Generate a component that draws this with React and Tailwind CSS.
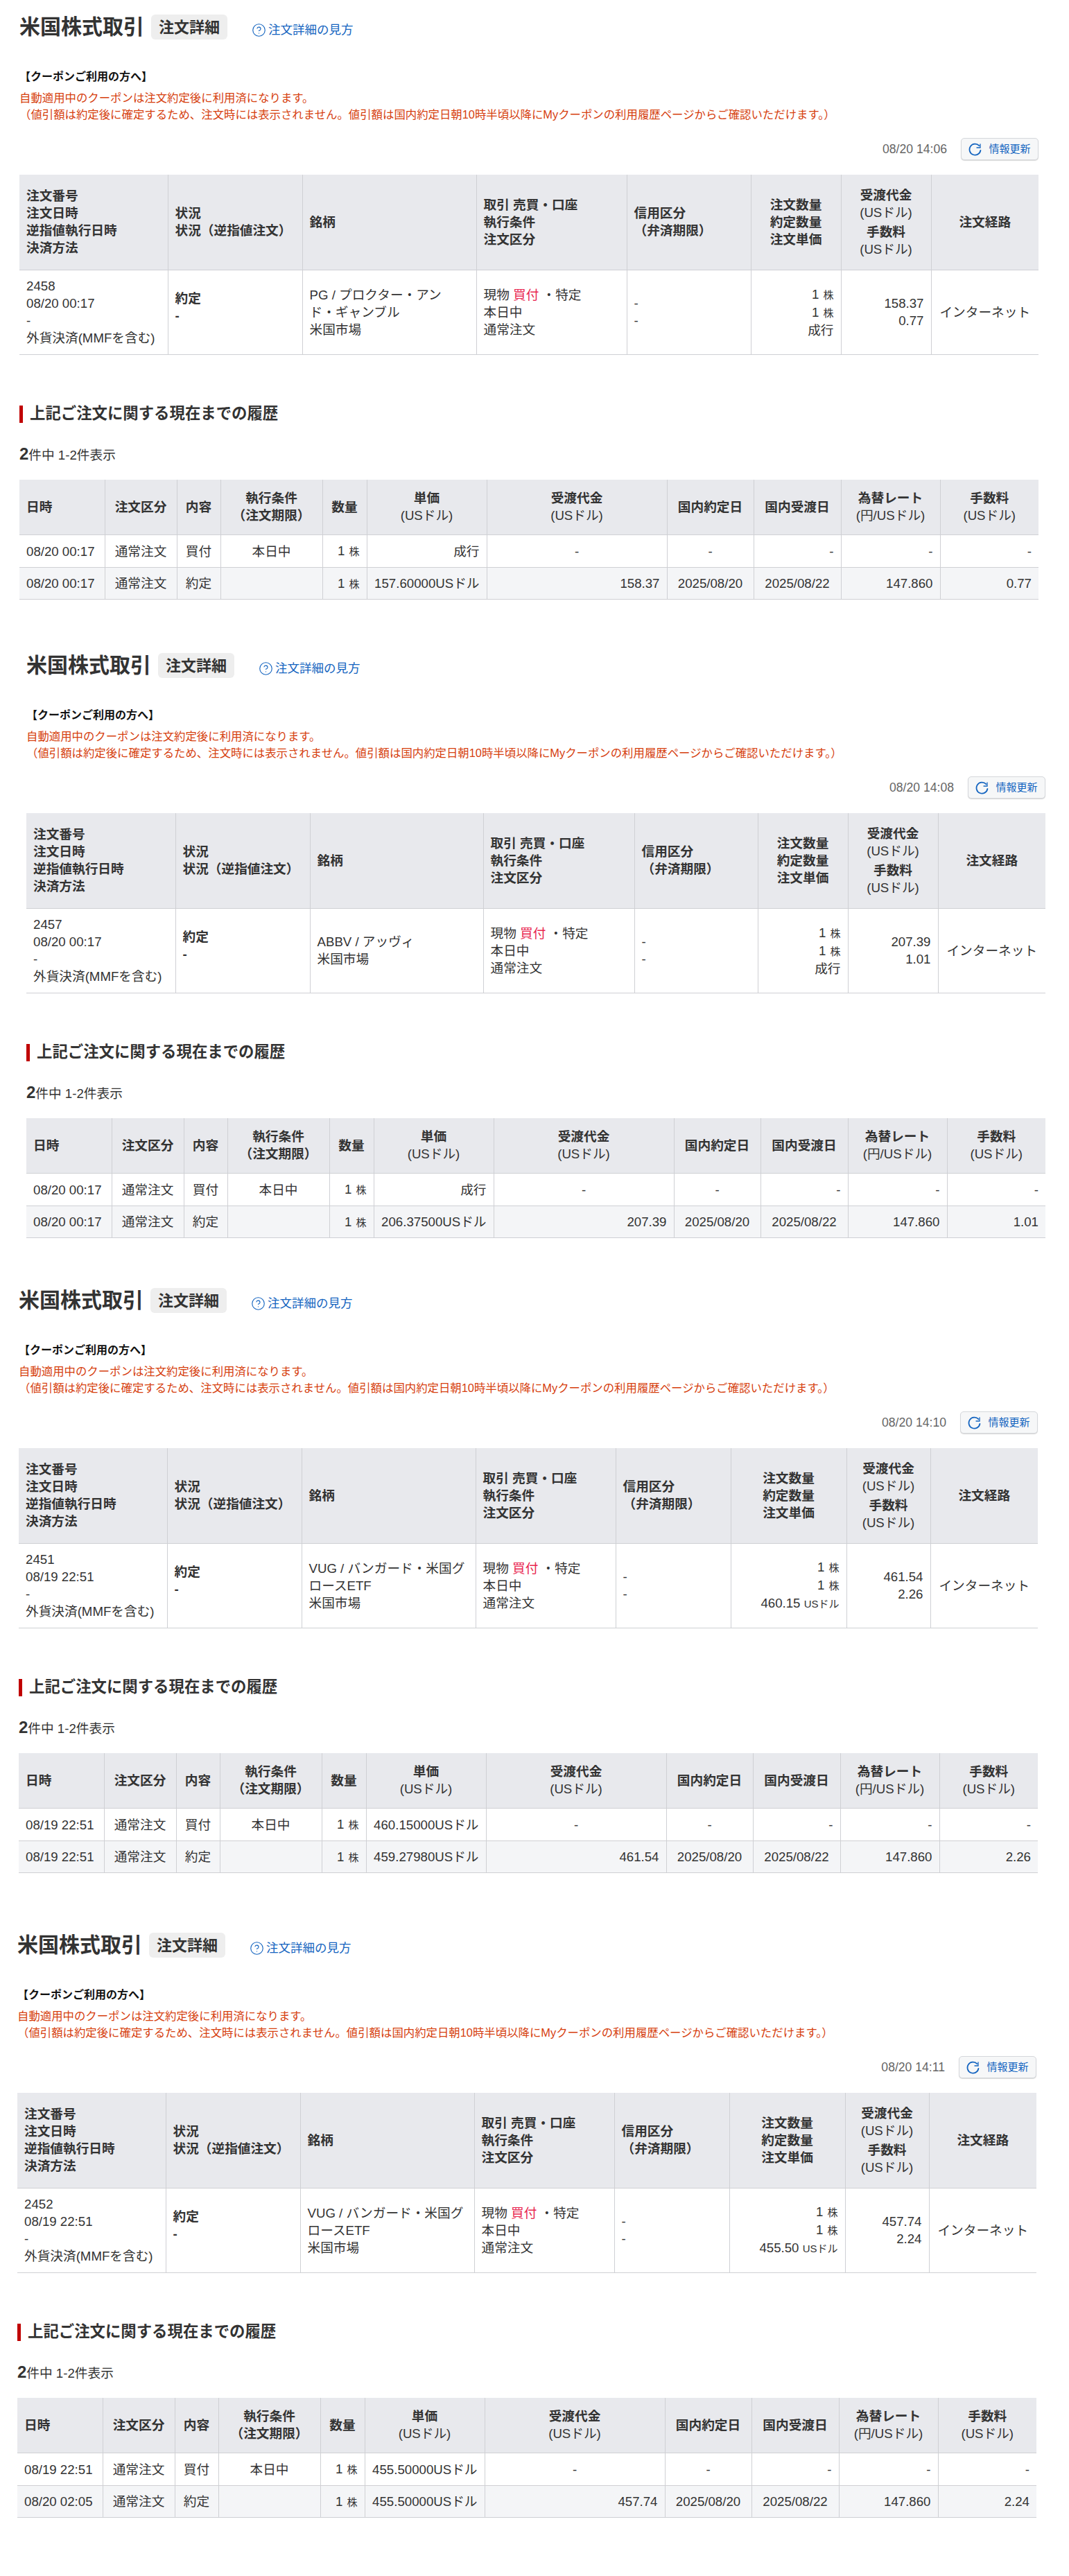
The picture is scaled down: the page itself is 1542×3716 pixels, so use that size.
import { CircleHelp } from "lucide-react";

const FONT = "[font-family:'Liberation_Sans','Noto_Sans_CJK_JP',sans-serif]";

const BLOCKS = [
  {
    wrap: "ml-[28px] pt-[21px]",
    stamp: "08/20 14:06",
    cols: ["w-[214px]", "w-[194px]", "w-[251px]", "w-[217px]", "w-[179px]", "w-[130px]", "w-[130px]", "w-[155px]"],
    no: "2458",
    at: "08/20 00:17",
    name: ["PG / プロクター・アン", "ド・ギャンブル"],
    unit: "成行",
    total: "158.37",
    fee: "0.77",
    rows: [
      ["08/20 00:17", "本日中", "成行"],
      ["08/20 00:17", "", "157.60000USドル"],
    ],
  },
  {
    wrap: "ml-[38px] mt-[77px]",
    stamp: "08/20 14:08",
    cols: ["w-[215px]", "w-[194px]", "w-[250px]", "w-[218px]", "w-[178px]", "w-[130px]", "w-[130px]", "w-[155px]"],
    no: "2457",
    at: "08/20 00:17",
    name: ["ABBV / アッヴィ"],
    unit: "成行",
    total: "207.39",
    fee: "1.01",
    rows: [
      ["08/20 00:17", "本日中", "成行"],
      ["08/20 00:17", "", "206.37500USドル"],
    ],
  },
  {
    wrap: "ml-[27px] mt-[72px]",
    stamp: "08/20 14:10",
    cols: ["w-[214px]", "w-[194px]", "w-[251px]", "w-[202px]", "w-[166px]", "w-[167px]", "w-[121px]", "w-[155px]"],
    no: "2451",
    at: "08/19 22:51",
    name: ["VUG / バンガード・米国グ", "ロースETF"],
    unit: "460.15",
    total: "461.54",
    fee: "2.26",
    rows: [
      ["08/19 22:51", "本日中", "460.15000USドル"],
      ["08/19 22:51", "", "459.27980USドル"],
    ],
  },
  {
    wrap: "ml-[25px] mt-[86px] pb-[84px]",
    stamp: "08/20 14:11",
    cols: ["w-[214px]", "w-[194px]", "w-[251px]", "w-[202px]", "w-[166px]", "w-[167px]", "w-[121px]", "w-[155px]"],
    no: "2452",
    at: "08/19 22:51",
    name: ["VUG / バンガード・米国グ", "ロースETF"],
    unit: "455.50",
    total: "457.74",
    fee: "2.24",
    rows: [
      ["08/19 22:51", "本日中", "455.50000USドル"],
      ["08/20 02:05", "", "455.50000USドル"],
    ],
  },
];

const TH = "border-r border-b border-[#cfd0d4] px-[10px] align-middle font-bold";
const TD = "border-r border-b border-[#cfd0d4] px-[10px] align-middle";

function Shares() {
  return (
    <span>
      1<span className="ml-[6px] text-[15px]">株</span>
    </span>
  );
}

function RefreshIcon() {
  return (
    <svg width="20" height="20" viewBox="0 0 20 20" fill="none" stroke="#1565c0" strokeWidth="1.8" strokeLinecap="round">
      <path d="M15.4 5.2A8 8 0 1 0 17.4 12" />
      <path d="M17 3v5h-5" strokeWidth="1.3" />
    </svg>
  );
}

function OrderTable({ b }) {
  return (
    <table className="w-[1470px] table-fixed text-[18.67px] leading-[25px] text-[#333]">
      <colgroup>
        {b.cols.map((c, i) => (
          <col key={i} className={c} />
        ))}
      </colgroup>
      <thead>
        <tr className="h-[137px] bg-[#e8e9ed]">
          <th className={`${TH} text-left`}>
            注文番号<br />注文日時<br />逆指値執行日時<br />決済方法
          </th>
          <th className={`${TH} text-left`}>
            状況<br />状況（逆指値注文）
          </th>
          <th className={`${TH} text-left`}>銘柄</th>
          <th className={`${TH} text-left`}>
            取引 売買・口座<br />執行条件<br />注文区分
          </th>
          <th className={`${TH} text-left`}>
            信用区分<br />（弁済期限）
          </th>
          <th className={`${TH} text-center`}>
            注文数量<br />約定数量<br />注文単価
          </th>
          <th className={`${TH} text-center`}>
            <div>受渡代金</div>
            <div className="font-normal">(USドル)</div>
            <div className="mt-[3px]">手数料</div>
            <div className="font-normal">(USドル)</div>
          </th>
          <th className={`${TH} border-r-0 text-center`}>注文経路</th>
        </tr>
      </thead>
      <tbody>
        <tr className="h-[122px]">
          <td className={TD}>
            {b.no}<br />{b.at}<br />-<br />外貨決済(MMFを含む)
          </td>
          <td className={`${TD} pb-[14px] font-bold`}>
            約定<br />-
          </td>
          <td className={TD}>
            {b.name.map((n) => (
              <div key={n}>{n}</div>
            ))}
            <div>米国市場</div>
          </td>
          <td className={TD}>
            現物 <span className="text-[#e8264f]">買付</span> ・特定<br />本日中<br />通常注文
          </td>
          <td className={TD}>
            -<br />-
          </td>
          <td className={`${TD} text-right`}>
            <div><Shares /></div>
            <div><Shares /></div>
            <div>
              {b.unit === "成行" ? (
                "成行"
              ) : (
                <>
                  {b.unit} <span className="text-[15px]">USドル</span>
                </>
              )}
            </div>
          </td>
          <td className={`${TD} text-right`}>
            {b.total}<br />{b.fee}
          </td>
          <td className={`${TD} border-r-0 text-center`}>インターネット</td>
        </tr>
      </tbody>
    </table>
  );
}

function HistoryTable({ b }) {
  return (
    <table className="mt-[25px] w-[1470px] table-fixed text-[18.67px] leading-[25px] text-[#333]">
      <colgroup>
        <col className="w-[123px]" />
        <col className="w-[104px]" />
        <col className="w-[63px]" />
        <col className="w-[147px]" />
        <col className="w-[64px]" />
        <col className="w-[173px]" />
        <col className="w-[260px]" />
        <col className="w-[125px]" />
        <col className="w-[126px]" />
        <col className="w-[143px]" />
        <col className="w-[142px]" />
      </colgroup>
      <thead>
        <tr className="h-[80px] bg-[#e8e9ed] text-center">
          <th className={`${TH} text-left`}>日時</th>
          <th className={TH}>注文区分</th>
          <th className={`${TH} px-0`}>内容</th>
          <th className={`${TH} px-0`}>
            執行条件<br />（注文期限）
          </th>
          <th className={`${TH} px-0`}>数量</th>
          <th className={TH}>
            単価<br /><span className="font-normal">(USドル)</span>
          </th>
          <th className={TH}>
            受渡代金<br /><span className="font-normal">(USドル)</span>
          </th>
          <th className={`${TH} px-0`}>国内約定日</th>
          <th className={`${TH} px-0`}>国内受渡日</th>
          <th className={`${TH} px-0`}>
            為替レート<br /><span className="font-normal">(円/USドル)</span>
          </th>
          <th className={`${TH} border-r-0`}>
            手数料<br /><span className="font-normal">(USドル)</span>
          </th>
        </tr>
      </thead>
      <tbody>
        <tr className="h-[47px]">
          <td className={TD}>{b.rows[0][0]}</td>
          <td className={`${TD} px-0 text-center`}>通常注文</td>
          <td className={`${TD} px-0 text-center`}>買付</td>
          <td className={`${TD} text-center`}>{b.rows[0][1]}</td>
          <td className={`${TD} text-right`}><Shares /></td>
          <td className={`${TD} whitespace-nowrap text-right`}>{b.rows[0][2]}</td>
          <td className={`${TD} text-center`}>-</td>
          <td className={`${TD} text-center`}>-</td>
          <td className={`${TD} text-right`}>-</td>
          <td className={`${TD} text-right`}>-</td>
          <td className={`${TD} border-r-0 text-right`}>-</td>
        </tr>
        <tr className="h-[46px] bg-[#f4f5f7]">
          <td className={TD}>{b.rows[1][0]}</td>
          <td className={`${TD} px-0 text-center`}>通常注文</td>
          <td className={`${TD} px-0 text-center`}>約定</td>
          <td className={TD}></td>
          <td className={`${TD} text-right`}><Shares /></td>
          <td className={`${TD} whitespace-nowrap text-right`}>{b.rows[1][2]}</td>
          <td className={`${TD} text-right`}>{b.total}</td>
          <td className={`${TD} px-0 text-center`}>2025/08/20</td>
          <td className={`${TD} px-0 text-center`}>2025/08/22</td>
          <td className={`${TD} text-right`}>147.860</td>
          <td className={`${TD} border-r-0 text-right`}>{b.fee}</td>
        </tr>
      </tbody>
    </table>
  );
}

function Block({ b }) {
  return (
    <section className={`${b.wrap} w-[1470px]`}>
      <div className="flex h-[36px] items-center">
        <h1 className="text-[30px] leading-[36px] font-bold text-[#333]">米国株式取引</h1>
        <span className="ml-[10px] flex h-[36px] w-[110px] items-center justify-center rounded-[6px] bg-[#eeeeee] text-[22px] font-bold text-[#333]">
          注文詳細
        </span>
        <a className="mt-[8px] ml-[35px] flex items-center gap-[3px] text-[17.5px] leading-[24px] text-[#1565c0]">
          <CircleHelp size={21} strokeWidth={1.3} />
          注文詳細の見方
        </a>
      </div>
      <p className="mt-[42px] text-[16px] leading-[24px] font-bold text-[#111]">【クーポンご利用の方へ】</p>
      <p className="mt-[6px] text-[16.4px] leading-[24px] text-[#d6400e]">
        自動適用中のクーポンは注文約定後に利用済になります。<br />
        （値引額は約定後に確定するため、注文時には表示されません。値引額は国内約定日朝10時半頃以降にMyクーポンの利用履歴ページからご確認いただけます。）
      </p>
      <div className="mt-[22px] flex h-[32px] items-center justify-end">
        <span className="mr-[20px] text-[17.6px] text-[#666]">{b.stamp}</span>
        <button className="flex h-[32px] w-[112px] items-center justify-center gap-[9px] rounded-[5px] border border-[#d5d7db] bg-[#f6f7f8] text-[15px] text-[#1565c0] shadow-[0_1px_1px_rgba(0,0,0,0.15)]">
          <RefreshIcon />
          情報更新
        </button>
      </div>
      <div className="mt-[21px]">
        <OrderTable b={b} />
      </div>
      <div className="mt-[73px] flex h-[25px] items-center border-l-[5px] border-[#c00000] pl-[10px] text-[22.4px] font-bold text-[#333]">
        上記ご注文に関する現在までの履歴
      </div>
      <p className="mt-[33px] flex h-[24px] items-baseline text-[18.67px] leading-[24px] text-[#333]">
        <span className="text-[24px] font-bold">2</span>件中 1-2件表示
      </p>
      <HistoryTable b={b} />
    </section>
  );
}

export default function App() {
  return (
    <div className={`${FONT} flow-root w-[1542px] bg-white`}>
      {BLOCKS.map((b) => (
        <Block key={b.no} b={b} />
      ))}
    </div>
  );
}
